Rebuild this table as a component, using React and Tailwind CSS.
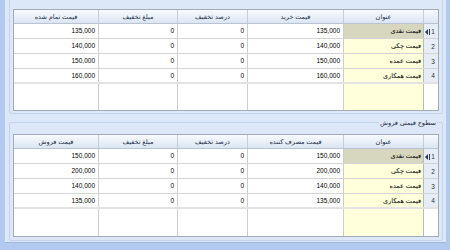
import React from 'react';

const cols = 'grid grid-cols-[85px_79px_70px_96px_80px_14px]';

const buyRows = [
  { title: 'قیمت نقدی', price: '135,000', final: '135,000' },
  { title: 'قیمت چکی', price: '140,000', final: '140,000' },
  { title: 'قیمت عمده', price: '150,000', final: '150,000' },
  { title: 'قیمت همکاری', price: '160,000', final: '160,000' },
];

const sellRows = [
  { title: 'قیمت نقدی', price: '150,000', final: '150,000' },
  { title: 'قیمت چکی', price: '200,000', final: '200,000' },
  { title: 'قیمت عمده', price: '140,000', final: '140,000' },
  { title: 'قیمت همکاری', price: '135,000', final: '135,000' },
];

function Grid({ headers, rows, height }) {
  return (
    <div className={`flex flex-col border border-[#a3abb6] bg-white ${height}`}>
      <div className={`${cols} h-[14px] border-b border-[#b8c4d4] bg-gradient-to-b from-[#f8fbfe] to-[#dbe5f3] text-[#1d2f4a]`}>
        {headers.map((h, i) => (
          <div key={i} className="flex items-center justify-center border-r border-[#c3cdda]">{h}</div>
        ))}
        <div />
      </div>
      {rows.map((r, i) => (
        <div key={i} className={`${cols} h-[15px] border-b ${i === rows.length - 1 ? 'border-b-2 border-[#e3e3e3]' : 'border-[#d4d4d4]'}`}>
          <div className="flex items-center justify-end pr-[3px] border-r border-[#cdcdcd]">{r.final}</div>
          <div className="flex items-center justify-end pr-[3px] border-r border-[#cdcdcd]">0</div>
          <div className="flex items-center justify-end pr-[3px] border-r border-[#cdcdcd]">0</div>
          <div className="flex items-center justify-end pr-[3px] border-r border-[#cdcdcd]">{r.price}</div>
          <div dir="rtl" className={`flex items-center justify-start pr-[2px] border-r border-[#b9b9b9] ${i === 0 ? 'bg-[#d7d6bf]' : 'bg-[#ffffdb]'}`}>{r.title}</div>
          <div className="relative flex items-center justify-center pl-[4px] pt-[1px] bg-[#e6edf7] text-[#2b3345]">
            {i === 0 && (
              <svg className="absolute left-[1px] top-[5px]" width="5" height="6" viewBox="0 0 5 6">
                <path d="M0 3 L3 0 L3 6 Z M4 0 H5 V6 H4 Z" fill="#2a3a55" />
              </svg>
            )}
            {i + 1}
          </div>
        </div>
      ))}
      <div className={`${cols} flex-1`}>
        <div className="border-r border-[#cdcdcd]" />
        <div className="border-r border-[#cdcdcd]" />
        <div className="border-r border-[#cdcdcd]" />
        <div className="border-r border-[#cdcdcd]" />
        <div className="border-r border-[#b9b9b9] bg-[#ffffdb]" />
        <div />
      </div>
    </div>
  );
}

export default function App() {
  return (
    <div
      className="w-[450px] h-[250px] overflow-hidden bg-[#b2caef] pl-[5px] pr-[4px] pb-[7px] text-[6.5px] text-black"
      style={{ fontFamily: '"Liberation Sans", "DejaVu Sans", sans-serif' }}
    >
      <div className="h-full bg-[#dce7f7] border-b border-[#9fb7df] pl-[4px] pr-[3px] flex flex-col">
        <div className="relative -mt-[4px] h-[118px] border border-[#c2d3ec] rounded-b-[2px] pl-[3px] pr-[3px] pt-[12px] pb-[3px]">
          <div dir="rtl" className="absolute right-[6px] -top-[6px] px-[1px] bg-[#dce7f7] text-[#1b2a40]">سطوح قیمتی خرید</div>
          <Grid
            headers={['قیمت تمام شده', 'مبلغ تخفیف', 'درصد تخفیف', 'قیمت خرید', 'عنوان']}
            rows={buyRows}
            height="h-[102px]"
          />
        </div>
        <div className="relative mt-[8px] h-[119px] border border-[#c2d3ec] rounded-[2px] pl-[3px] pr-[3px] pt-[11px]">
          <div dir="rtl" className="absolute right-[5px] -top-[4px] px-[1px] bg-[#dce7f7] text-[#1b2a40] leading-[8px]">سطوح قیمتی فروش</div>
          <Grid
            headers={['قیمت فروش', 'مبلغ تخفیف', 'درصد تخفیف', 'قیمت مصرف کننده', 'عنوان']}
            rows={sellRows}
            height="h-[103px]"
          />
        </div>
      </div>
    </div>
  );
}
